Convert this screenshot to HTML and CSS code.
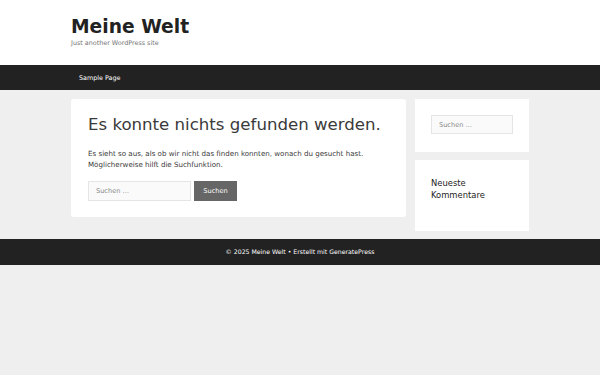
FILE: index.html
```html
<!DOCTYPE html>
<html lang="de">
<head>
  <meta charset="UTF-8">
  <meta name="viewport" content="width=device-width, initial-scale=1.0">
  <title>Seite nicht gefunden – Meine Welt</title>
  <link rel="stylesheet" href="styles.css">
</head>
<body>
  <header class="site-header">
    <div class="inside">
      <p class="site-title">Meine Welt</p>
      <p class="site-description">Just another WordPress site</p>
    </div>
  </header>

  <nav class="main-nav">
    <div class="inside">
      <a href="#">Sample Page</a>
    </div>
  </nav>

  <div class="site-content">
    <main class="content-area">
      <h1 class="page-title">Es konnte nichts gefunden werden.</h1>
      <p class="page-text">Es sieht so aus, als ob wir nicht das finden konnten, wonach du gesucht hast. Möglicherweise hilft die Suchfunktion.</p>
      <form class="search-form">
        <input type="search" class="search-field" placeholder="Suchen …">
        <button type="button" class="search-submit">Suchen</button>
      </form>
    </main>

    <aside class="sidebar">
      <div class="widget">
        <input type="search" class="search-field widget-search" placeholder="Suchen …">
      </div>
      <div class="widget widget-comments">
        <h2 class="widget-title">Neueste Kommentare</h2>
      </div>
    </aside>
  </div>

  <footer class="site-footer">
    <span>© 2025 Meine Welt • Erstellt mit GeneratePress</span>
  </footer>
</body>
</html>
```

FILE: styles.css
```css
body {
  margin: 0;
  background-color: #efefef;
  font-family: "DejaVu Sans", "Liberation Sans", sans-serif;
  color: #3a3a3a;
}

.inside {
  width: 458px;
  margin: 0 auto;
}

/* Kopfbereich */
.site-header {
  background-color: #fff;
  height: 65px;
}

.site-header .inside {
  padding-top: 15px;
}

.site-title {
  margin: 0;
  font-size: 18.7px;
  font-weight: bold;
  line-height: 24px;
  color: #222;
}

.site-description {
  margin: 0;
  font-size: 6.4px;
  line-height: 9px;
  color: #757575;
}

/* Navigation */
.main-nav {
  background-color: #222;
  height: 25px;
}

.main-nav a {
  display: inline-block;
  padding: 0 8px;
  line-height: 25px;
  font-size: 6.4px;
  color: #fff;
  text-decoration: none;
}

/* Inhalt */
.site-content {
  width: 458px;
  margin: 0 auto;
  padding: 9px 0 8px;
  display: flex;
  gap: 9px;
  align-items: flex-start;
}

.content-area {
  flex: 0 0 335px;
  box-sizing: border-box;
  background-color: #fff;
  border-radius: 3px;
  padding: 14px 17px 16px;
}

.page-title {
  margin: 0 0 11px;
  font-size: 16.6px;
  font-weight: normal;
  line-height: 24px;
  white-space: nowrap;
  color: #3a3a3a;
}

.page-text {
  margin: 0 0 11px;
  font-size: 7.1px;
  line-height: 11px;
}

.search-form {
  display: flex;
  gap: 3px;
}

.search-field {
  box-sizing: border-box;
  width: 103px;
  height: 20px;
  padding: 0 7px;
  border: 1px solid #e5e5e5;
  background-color: #fafafa;
  font-family: inherit;
  font-size: 6.6px;
  color: #666;
}

.search-field::placeholder {
  color: #888;
}

.search-submit {
  width: 43px;
  height: 20px;
  border: none;
  background-color: #666;
  color: #fff;
  font-family: inherit;
  font-size: 6.6px;
  padding: 0;
}

.sidebar {
  flex: 0 0 114px;
  display: flex;
  flex-direction: column;
  gap: 8px;
}

.widget {
  box-sizing: border-box;
  background-color: #fff;
  padding: 16px;
  height: 53px;
}

.widget-search {
  display: block;
  width: 82px;
  height: 19px;
}

.widget-comments {
  padding-top: 17px;
  height: 71px;
}

.widget-title {
  margin: 0;
  font-size: 8.4px;
  font-weight: normal;
  line-height: 12px;
  color: #222;
}

/* Fußbereich */
.site-footer {
  background-color: #222;
  height: 26px;
  line-height: 26px;
  text-align: center;
  font-size: 6.2px;
  color: #fff;
}
```
